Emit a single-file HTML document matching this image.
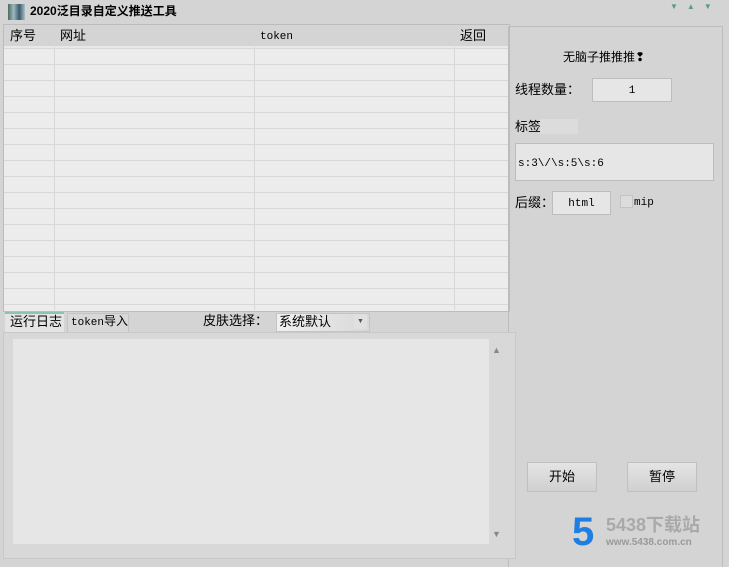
<!DOCTYPE html><html><head><style>
body{margin:0;width:729px;height:557px;background:#d4d4d4;position:relative;overflow:hidden;font:12px/15px "Liberation Sans","Noto Sans CJK SC",sans-serif;color:#000}
.a{position:absolute}
.mono{font-family:"Liberation Mono","Noto Sans CJK SC",monospace;font-size:11px}
.box{background:#e6e6e6;border:1px solid #bdbdbd}
.btn{background:linear-gradient(#e4e4e4,#d0d0d0);border:1px solid #c0c0c0;text-align:center;line-height:28px;font-size:13px}
</style></head><body>
<div class="a" style="left:8px;top:4px;width:17px;height:16px;background:linear-gradient(90deg,#4a6b5a,#9fb7c0,#3b5a6b,#a8c0c8);"></div>
<div class="a" style="left:30px;top:4px;font-size:12px;font-weight:bold">2020泛目录自定义推送工具</div>
<div class="a" style="left:670px;top:1px;width:58px;height:11px;color:#5a9a8a;font-size:8px;letter-spacing:9px;line-height:11px">▼▲▼</div>
<div class="a" style="left:3px;top:24px;width:505px;height:286px;background:#ececec;border:1px solid #bcbcbc;
background-image:linear-gradient(#d8d8d8 1px,transparent 1px);background-size:100% 16px;background-position:0 23px"></div>
<div class="a" style="left:4px;top:25px;width:504px;height:21px;background:#d4d4d4;border-bottom:2px solid #e8e8e8"></div>
<div class="a" style="left:54px;top:47px;width:1px;height:263px;background:#d8d8d8"></div>
<div class="a" style="left:254px;top:47px;width:1px;height:263px;background:#d8d8d8"></div>
<div class="a" style="left:454px;top:47px;width:1px;height:263px;background:#d8d8d8"></div>
<div class="a" style="left:10px;top:28px;font-size:13px">序号</div>
<div class="a" style="left:60px;top:28px;font-size:13px">网址</div>
<div class="a mono" style="left:260px;top:30px">token</div>
<div class="a" style="left:460px;top:28px;font-size:13px">返回</div>
<div class="a" style="left:508px;top:26px;width:213px;height:540px;border:1px solid #bcbcbc;border-bottom:none"></div>
<div class="a" style="left:563px;top:50px;font-size:12px">无脑子推推推❢</div>
<div class="a" style="left:515px;top:82px;font-size:13px">线程数量：</div>
<div class="a box mono" style="left:592px;top:78px;width:78px;height:22px;line-height:24px;text-align:center">1</div>
<div class="a" style="left:515px;top:119px;font-size:13px">标签</div>
<div class="a" style="left:540px;top:119px;width:38px;height:15px;background:#dcdcdc"></div>
<div class="a box mono" style="left:515px;top:143px;width:199px;height:38px;line-height:40px;padding-left:2px;box-sizing:border-box">s:3\/\s:5\s:6</div>
<div class="a" style="left:515px;top:195px;font-size:13px">后缀：</div>
<div class="a box mono" style="left:552px;top:191px;width:57px;height:22px;line-height:24px;text-align:center">html</div>
<div class="a" style="left:620px;top:195px;width:11px;height:11px;background:#dcdcdc;border:1px solid #c4c4c4"></div>
<div class="a mono" style="left:634px;top:196px">mip</div>
<div class="a btn" style="left:527px;top:462px;width:68px;height:28px">开始</div>
<div class="a btn" style="left:627px;top:462px;width:68px;height:28px">暂停</div>
<div class="a" style="left:572px;top:512px;font:bold 40px/40px 'Liberation Sans',sans-serif;color:#1e7fe0">5</div>
<div class="a" style="left:606px;top:515px;font-size:18px;line-height:20px;color:#a9a9a9;font-weight:bold">5438下载站</div>
<div class="a" style="left:606px;top:537px;font-size:10px;line-height:12px;color:#9a9a9a;font-weight:bold">www.5438.com.cn</div>
<div class="a" style="left:5px;top:312px;width:59px;height:20px;background:#e4e4e4;border-top:2px solid #8cc4b0"></div>
<div class="a" style="left:10px;top:314px;font-size:13px">运行日志</div>
<div class="a" style="left:67px;top:313px;width:60px;height:18px;background:#d8d8d8;border:1px solid #c4c4c4"></div>
<div class="a mono" style="left:71px;top:315px">token<span style="font-size:12px">导入</span></div>
<div class="a" style="left:203px;top:313px;font-size:13px">皮肤选择：</div>
<div class="a" style="left:276px;top:313px;width:92px;height:17px;background:linear-gradient(90deg,#f0f0f0,#d8d8d8);border:1px solid #c4c4c4"></div>
<div class="a" style="left:279px;top:314px;font-size:13px">系统默认</div>
<div class="a" style="left:354px;top:314px;width:13px;height:15px;background:#e0e0e0;font-size:7px;text-align:center;line-height:15px;color:#555">▼</div>
<div class="a" style="left:3px;top:332px;width:511px;height:225px;border:1px solid #c8c8c8;background:#d8d8d8"></div>
<div class="a" style="left:13px;top:339px;width:476px;height:205px;background:#e6e6e6"></div>
<div class="a" style="left:492px;top:343px;font-size:9px;color:#888">▲</div>
<div class="a" style="left:492px;top:527px;font-size:9px;color:#888">▼</div>
</body></html>
